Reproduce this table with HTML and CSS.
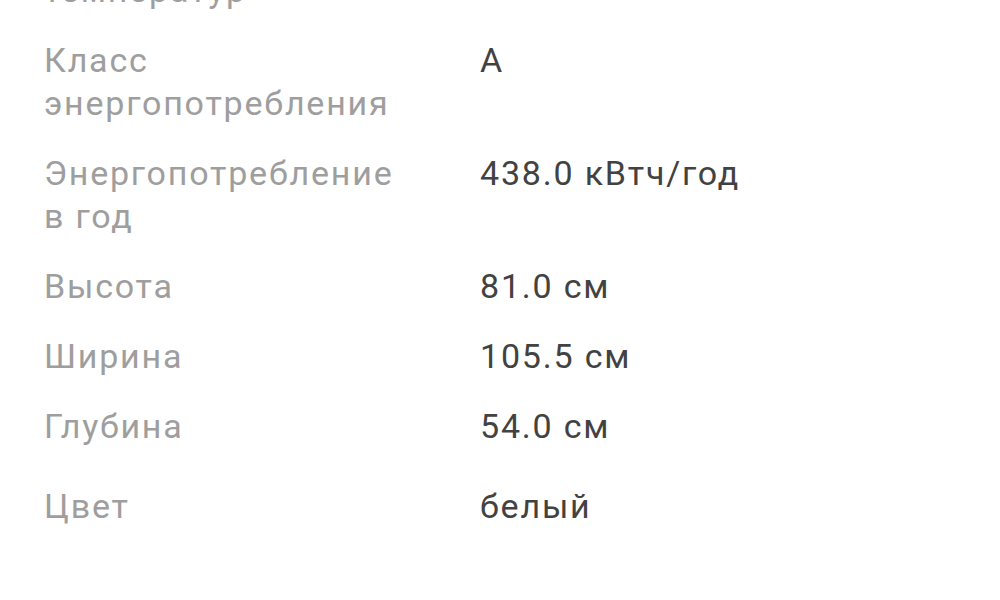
FILE: index.html
```html
<!DOCTYPE html>
<html lang="ru">
<head>
<meta charset="utf-8">
<link rel="stylesheet" href="styles.css">
</head>
<body>
<div class="specs">
  <div class="row">
    <div class="label">Диапазон<br>температур</div>
    <div class="value"></div>
  </div>
  <div class="row">
    <div class="label">Класс<br>энергопотребления</div>
    <div class="value">A</div>
  </div>
  <div class="row">
    <div class="label">Энергопотребление<br>в год</div>
    <div class="value">438.0 кВтч/год</div>
  </div>
  <div class="row">
    <div class="label">Высота</div>
    <div class="value">81.0 см</div>
  </div>
  <div class="row">
    <div class="label">Ширина</div>
    <div class="value">105.5 см</div>
  </div>
  <div class="row">
    <div class="label">Глубина</div>
    <div class="value">54.0 см</div>
  </div>
  <div class="row row-last">
    <div class="label">Цвет</div>
    <div class="value">белый</div>
  </div>
</div>
</body>
</html>
```
FILE: styles.css
```css
html, body {
  margin: 0;
  padding: 0;
  background: #ffffff;
  overflow: hidden;
}
.specs {
  font-family: Roboto, "Noto Sans", sans-serif;
  font-size: 34px;
  line-height: 43px;
  letter-spacing: 1.8px;
  margin-top: -74px;
  padding-left: 44px;
  display: flex;
  flex-direction: column;
  gap: 27px;
}
.row {
  display: grid;
  grid-template-columns: 436px 1fr;
}
.row-last {
  margin-top: 10px;
}
.label {
  color: #9e9e9e;
}
.value {
  color: #424242;
}
```
